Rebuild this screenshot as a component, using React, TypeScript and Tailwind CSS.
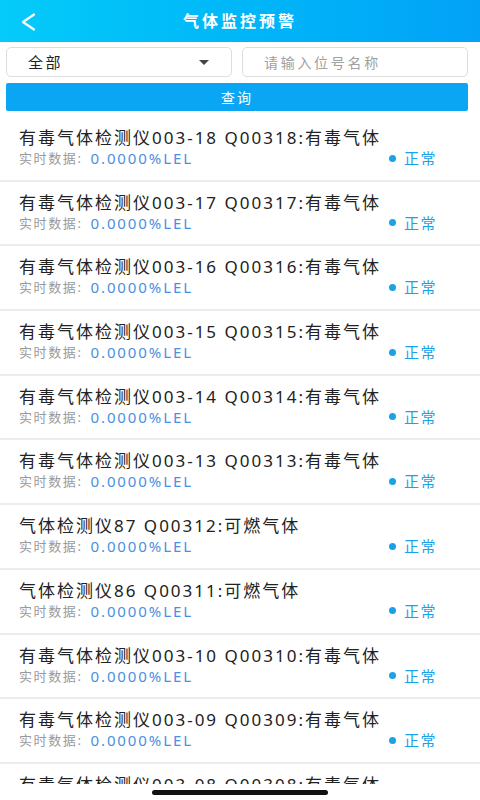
interface Sensor {
  name: string;
  value: string;
  status: string;
}

const sensors: Sensor[] = [
  { name: '有毒气体检测仪003-18 Q00318:有毒气体', value: '0.0000%LEL', status: '正常' },
  { name: '有毒气体检测仪003-17 Q00317:有毒气体', value: '0.0000%LEL', status: '正常' },
  { name: '有毒气体检测仪003-16 Q00316:有毒气体', value: '0.0000%LEL', status: '正常' },
  { name: '有毒气体检测仪003-15 Q00315:有毒气体', value: '0.0000%LEL', status: '正常' },
  { name: '有毒气体检测仪003-14 Q00314:有毒气体', value: '0.0000%LEL', status: '正常' },
  { name: '有毒气体检测仪003-13 Q00313:有毒气体', value: '0.0000%LEL', status: '正常' },
  { name: '气体检测仪87 Q00312:可燃气体', value: '0.0000%LEL', status: '正常' },
  { name: '气体检测仪86 Q00311:可燃气体', value: '0.0000%LEL', status: '正常' },
  { name: '有毒气体检测仪003-10 Q00310:有毒气体', value: '0.0000%LEL', status: '正常' },
  { name: '有毒气体检测仪003-09 Q00309:有毒气体', value: '0.0000%LEL', status: '正常' },
  { name: '有毒气体检测仪003-08 Q00308:有毒气体', value: '0.0000%LEL', status: '正常' },
];

function SensorRow({ item }: { item: Sensor }) {
  return (
    <div className="h-[64.7px] shrink-0 border-b-2 border-[#ececec] pl-[19px] pr-[43px] pt-[11px]">
      <div className="whitespace-nowrap text-[17px] leading-[20px] tracking-[2px] text-[#222]">
        {item.name}
      </div>
      <div className="mt-[1px] flex h-[18px] items-center leading-[18px]">
        <span className="text-[13px] leading-[18px] tracking-[1.6px] text-[#9a9a9a]">实时数据:</span>
        <span className="ml-[8px] text-[15px] leading-[18px] tracking-[1.9px] text-[#4a90e2]">{item.value}</span>
        <span className="ml-auto flex items-center">
          <span className="h-[7px] w-[7px] rounded-full bg-[#1aa2e8]" />
          <span className="ml-[8px] text-[15px] leading-[18px] tracking-[1.5px] text-[#1aa2e8]">{item.status}</span>
        </span>
      </div>
    </div>
  );
}

export default function App() {
  return (
    <div
      className="flex h-[800px] w-[480px] flex-col overflow-hidden bg-white"
      style={{ fontFamily: '"Noto Sans", "Noto Sans CJK SC", sans-serif' }}
    >
      {/* 顶栏 */}
      <div className="relative flex h-[42px] shrink-0 items-center justify-center bg-gradient-to-r from-[#05cbf9] to-[#03a2f7]">
        <svg className="absolute left-[18px] top-[11px] h-[22px] w-[20px]" viewBox="0 0 20 22" fill="none">
          <polyline points="16,3.5 5,11 16,18.5" stroke="white" strokeWidth="2.2" strokeLinecap="round" strokeLinejoin="round" />
        </svg>
        <span className="text-[16px] font-bold tracking-[3px] text-white">气体监控预警</span>
      </div>

      {/* 筛选 */}
      <div className="flex shrink-0 flex-col gap-[6px] pb-[6px] pl-[6px] pr-[12px] pt-[5px]">
        <div className="flex gap-[10px]">
          <div className="flex h-[30px] w-[226px] items-center rounded-[5px] border border-[#dddddd] pl-[21px] pr-[22px]">
            <span className="text-[15px] tracking-[2.5px] text-[#222]">全部</span>
            <span className="ml-auto h-0 w-0 border-x-[5px] border-t-[5px] border-x-transparent border-t-[#444]" />
          </div>
          <div className="flex h-[30px] w-[226px] items-center rounded-[5px] border border-[#dddddd] pl-[21px]">
            <span className="text-[14px] tracking-[2.7px] text-[#a0a0a0]">请输入位号名称</span>
          </div>
        </div>
        <button className="flex h-[28px] items-center justify-center rounded-[2px] bg-[#0aa6f3]">
          <span className="text-[14px] tracking-[2px] text-white">查询</span>
        </button>
      </div>

      {/* 列表 */}
      <div className="flex min-h-0 flex-1 flex-col overflow-hidden">
        {sensors.map((s) => (
          <SensorRow key={s.name} item={s} />
        ))}
      </div>

      {/* 底部指示条 */}
      <div className="flex h-[16px] shrink-0 items-center justify-center bg-white">
        <div className="h-[5px] w-[176px] rounded-full bg-[#111]" />
      </div>
    </div>
  );
}
